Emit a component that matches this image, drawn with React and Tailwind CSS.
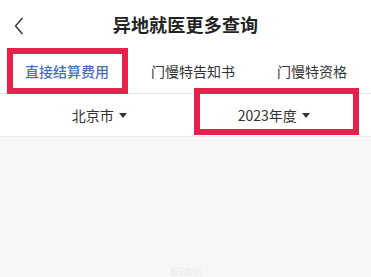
const tabs = ["直接结算费用", "门慢特告知书", "门慢特资格"];

const Caret = () => (
  <svg width="8" height="5" viewBox="0 0 8 5" className="ml-[5px]">
    <path d="M0 0 L8 0 L4 5 Z" fill="#333" />
  </svg>
);

export default function App() {
  return (
    <div
      className="w-[371px] h-[277px] overflow-hidden bg-white flex flex-col"
      style={{ fontFamily: '"Noto Sans CJK SC", "Noto Sans", sans-serif' }}
    >
      <div className="relative h-12 flex items-center justify-center shrink-0">
        <svg width="10" height="18" viewBox="0 0 10 18" className="absolute left-[14px] top-[17px]">
          <path d="M8.5 1 L1.5 9 L8.5 17" fill="none" stroke="#333" strokeWidth="1.4" />
        </svg>
        <h1 className="text-[18px] font-bold text-[#222] leading-none tracking-[0.2px]">异地就医更多查询</h1>
      </div>

      <div className="relative h-[46px] flex items-center justify-between pl-[25px] pr-[24px] border-b border-[#e6e6e6] shrink-0">
        {tabs.map((t, i) => (
          <span
            key={t}
            className={
              i === 0
                ? "text-[14px] leading-none text-[#4a6fbd] font-medium"
                : "text-[14px] leading-none text-[#333]"
            }
          >
            {t}
          </span>
        ))}
        <div className="absolute left-[7px] top-0 w-[121px] h-[46px] border-[6px] border-[#e8204c]" />
      </div>

      <div className="h-[43px] flex border-b border-[#ececec] shrink-0">
        <div className="flex-1 flex items-center justify-center pl-3">
          <span className="text-[14px] leading-none text-[#333]">北京市</span>
          <Caret />
        </div>
        <div className="relative flex-1 flex items-center justify-center pr-[10px]">
          <span className="text-[14px] leading-none text-[#333]">2023年度</span>
          <Caret />
          <div className="absolute left-[7px] right-[12px] -top-[6px] bottom-[1px] border-[6px] border-[#e8204c]" />
        </div>
      </div>

      <div className="flex-1 bg-[#f6f7f9] flex items-end justify-center">
        <span className="text-[8px] leading-none text-[#ebebee] mb-[1px]">暂无数据</span>
      </div>
    </div>
  );
}
